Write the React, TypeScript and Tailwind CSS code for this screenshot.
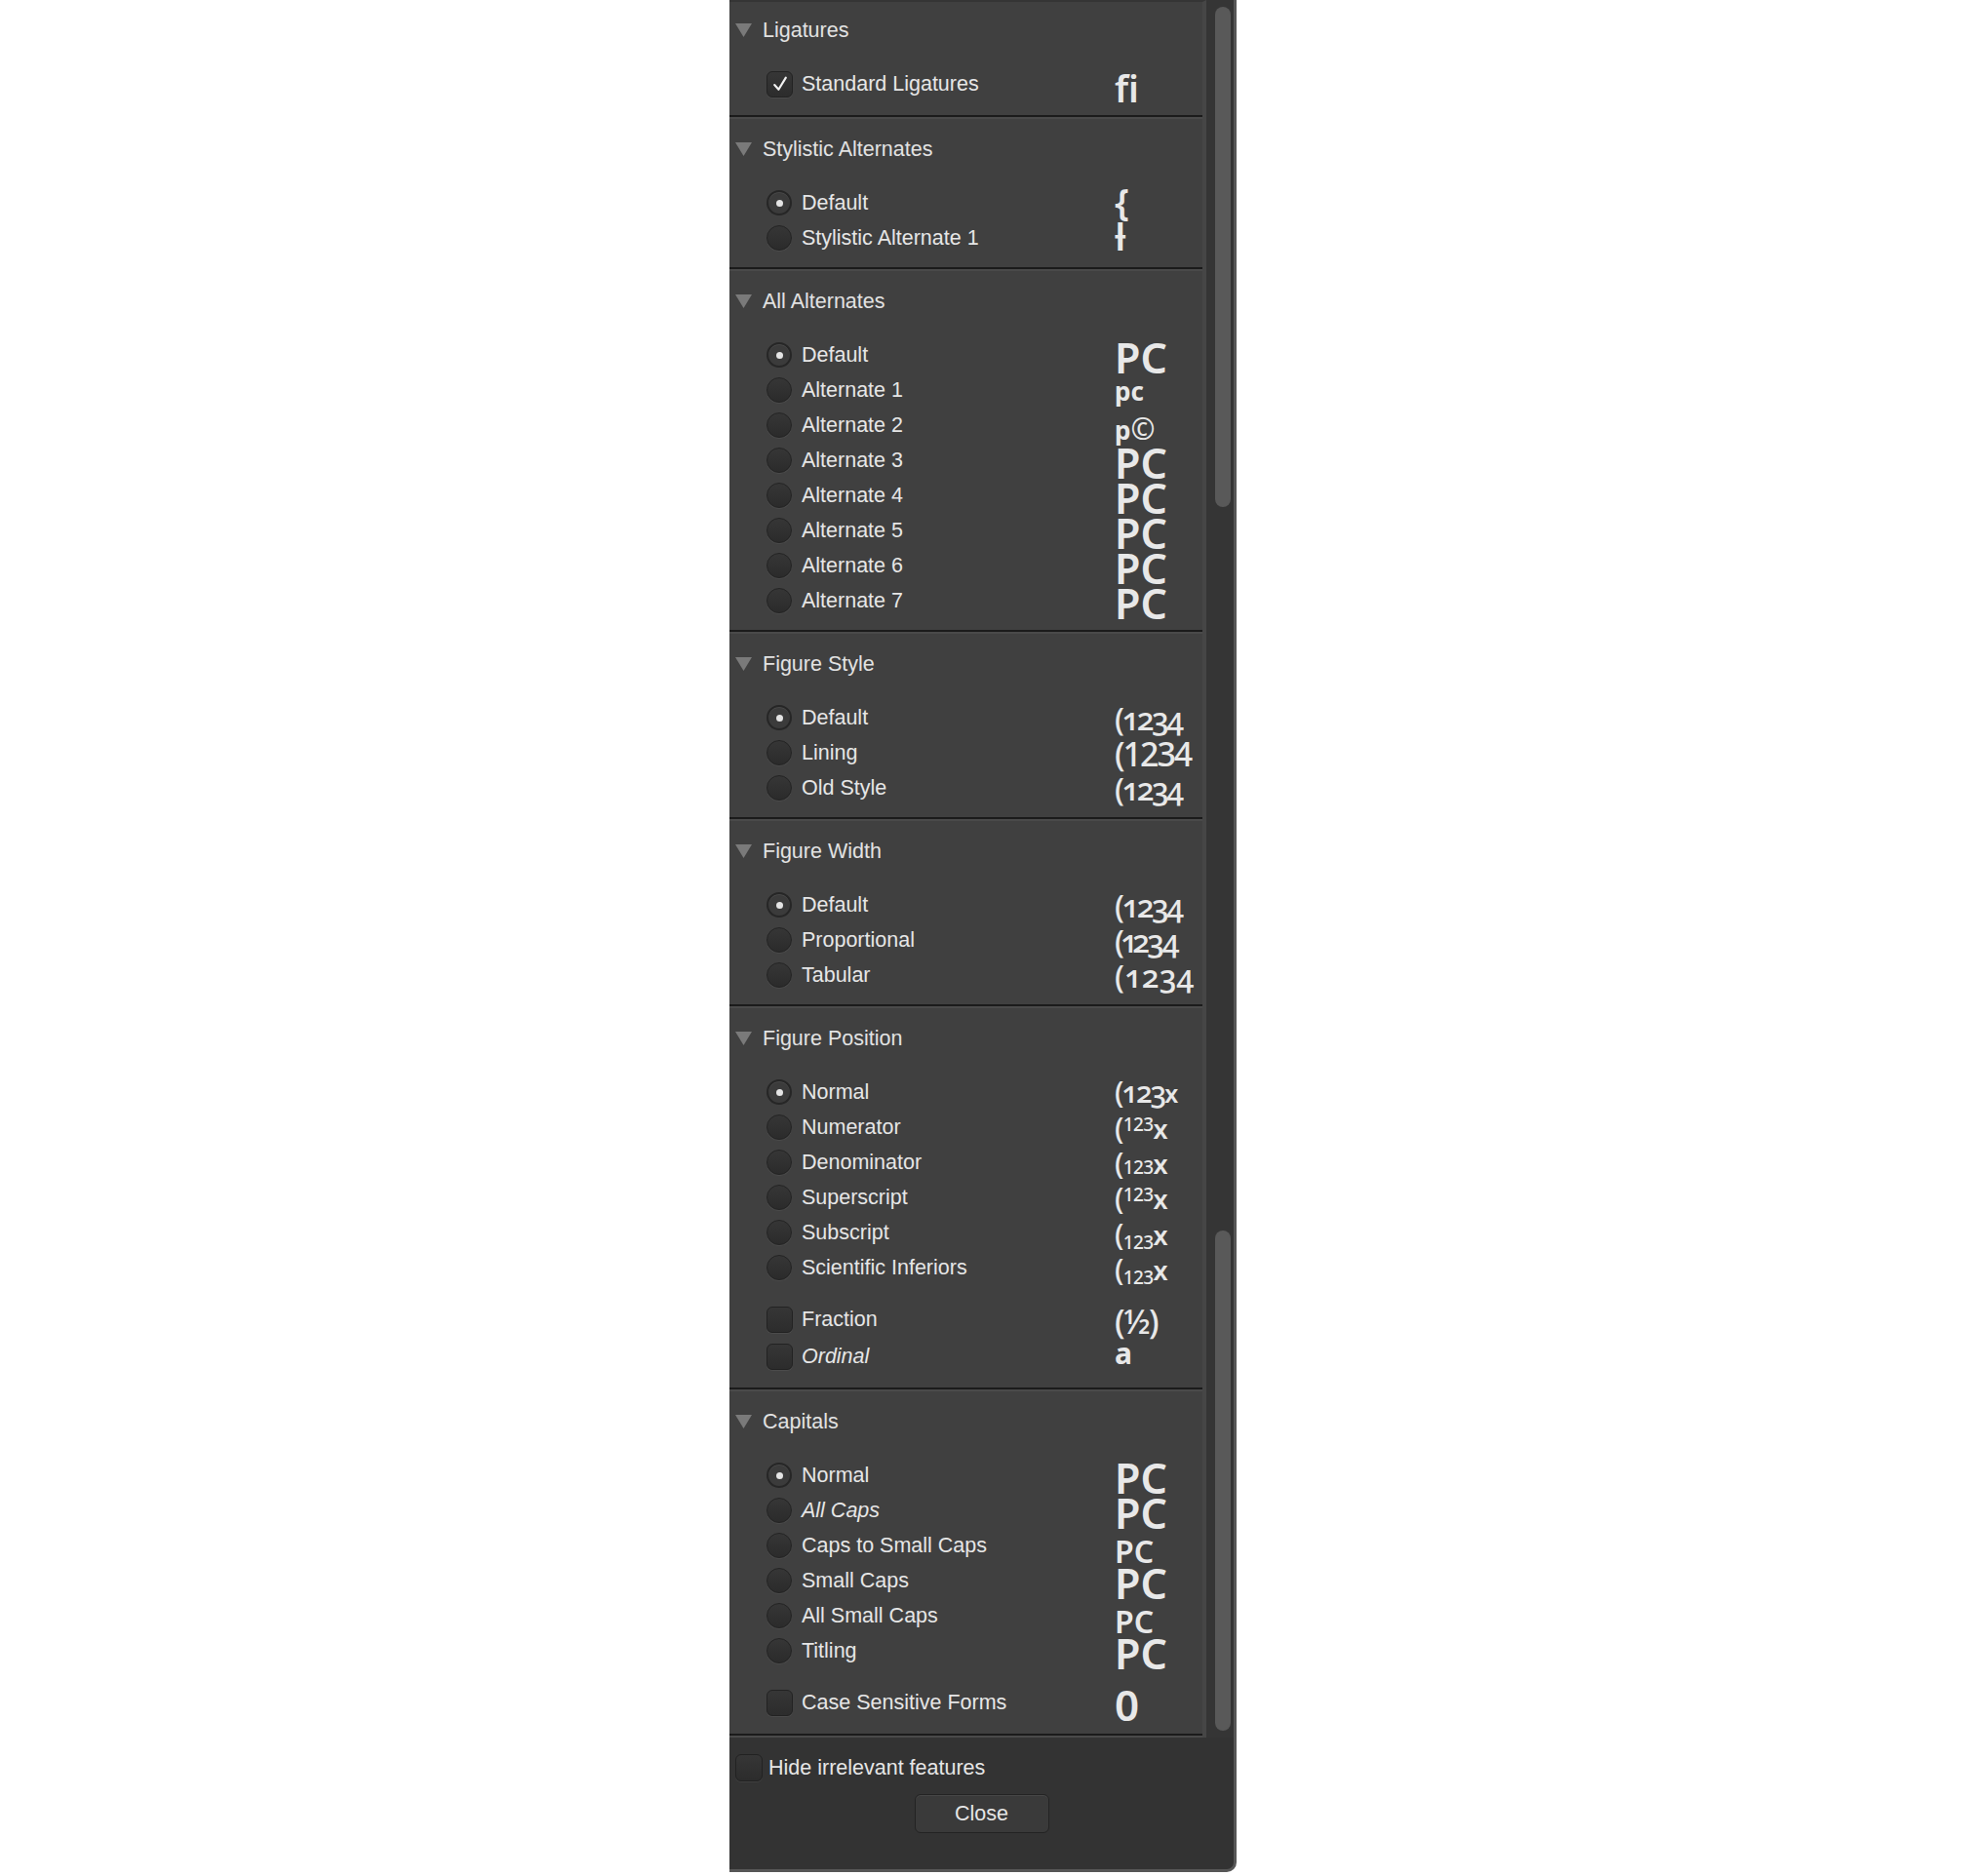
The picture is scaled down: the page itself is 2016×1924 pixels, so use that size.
import type { ReactNode } from "react";

type Row = {
  kind: "radio" | "check";
  label: string;
  on?: boolean;
  italic?: boolean;
  gap?: boolean;
  sample: ReactNode;
};

type Section = { title: string; rows: Row[] };

const SAMPLE = "font-['Noto_Sans',sans-serif] text-[#e8e8e8] leading-none whitespace-nowrap";

const bigPC = <div className={`${SAMPLE} text-[43px] font-semibold -mt-[1px]`}>PC</div>;
const smallPC = <div className={`${SAMPLE} text-[32px] font-semibold mt-[8px]`}>PC</div>;
const osNums = (extra: string) => (
  <div className={`${SAMPLE} text-[32px] font-medium oldstyle-nums ${extra}`}>(1234</div>
);
const supNums = (
  <div className={`${SAMPLE} text-[30px] font-medium mt-[4px] tracking-[-0.02em]`}>
    (<span className="text-[19px] lining-nums align-[8px]">123</span>
    <span className="text-[27px] font-semibold">x</span>
  </div>
);
const dnomNums = (
  <div className={`${SAMPLE} text-[30px] font-medium mt-[4px] tracking-[-0.02em]`}>
    (<span className="text-[19px] lining-nums">123</span>
    <span className="text-[27px] font-semibold">x</span>
  </div>
);
const subNums = (
  <div className={`${SAMPLE} text-[30px] font-medium mt-[5px] tracking-[-0.02em]`}>
    (<span className="text-[19px] lining-nums align-[-4px]">123</span>
    <span className="text-[27px] font-semibold">x</span>
  </div>
);

const sections: Section[] = [
  {
    title: "Ligatures",
    rows: [
      {
        kind: "check",
        label: "Standard Ligatures",
        on: true,
        sample: <div className={`${SAMPLE} text-[38px] font-semibold mt-[3px]`}>fi</div>,
      },
    ],
  },
  {
    title: "Stylistic Alternates",
    rows: [
      {
        kind: "radio",
        label: "Default",
        on: true,
        sample: <div className={`${SAMPLE} text-[38px] font-semibold -mt-[3px]`}>{"{"}</div>,
      },
      {
        kind: "radio",
        label: "Stylistic Alternate 1",
        sample: <div className={`${SAMPLE} text-[38px] font-semibold -mt-[3px]`}>ƚ</div>,
      },
    ],
  },
  {
    title: "All Alternates",
    rows: [
      { kind: "radio", label: "Default", on: true, sample: bigPC },
      {
        kind: "radio",
        label: "Alternate 1",
        sample: <div className={`${SAMPLE} text-[26px] font-bold mt-[6px]`}>pc</div>,
      },
      {
        kind: "radio",
        label: "Alternate 2",
        sample: (
          <div className={`${SAMPLE} text-[26px] font-bold mt-[7px]`}>
            p<span className="text-[30px] font-normal">©</span>
          </div>
        ),
      },
      { kind: "radio", label: "Alternate 3", sample: bigPC },
      { kind: "radio", label: "Alternate 4", sample: bigPC },
      { kind: "radio", label: "Alternate 5", sample: bigPC },
      { kind: "radio", label: "Alternate 6", sample: bigPC },
      { kind: "radio", label: "Alternate 7", sample: bigPC },
    ],
  },
  {
    title: "Figure Style",
    rows: [
      { kind: "radio", label: "Default", on: true, sample: osNums("mt-[3px] tracking-[-0.08em]") },
      {
        kind: "radio",
        label: "Lining",
        sample: (
          <div className={`${SAMPLE} text-[34px] font-medium lining-nums tracking-[-0.06em] mt-[2px]`}>
            (1234
          </div>
        ),
      },
      { kind: "radio", label: "Old Style", sample: osNums("mt-[3px] tracking-[-0.08em]") },
    ],
  },
  {
    title: "Figure Width",
    rows: [
      { kind: "radio", label: "Default", on: true, sample: osNums("mt-[3px] tracking-[-0.08em]") },
      { kind: "radio", label: "Proportional", sample: osNums("mt-[3px] tracking-[-0.08em] proportional-nums") },
      { kind: "radio", label: "Tabular", sample: osNums("mt-[3px] tabular-nums") },
    ],
  },
  {
    title: "Figure Position",
    rows: [
      {
        kind: "radio",
        label: "Normal",
        on: true,
        sample: (
          <div className={`${SAMPLE} text-[30px] font-medium oldstyle-nums tracking-[-0.07em] mt-[3px]`}>
            (123<span className="text-[25px] font-semibold">x</span>
          </div>
        ),
      },
      { kind: "radio", label: "Numerator", sample: supNums },
      { kind: "radio", label: "Denominator", sample: dnomNums },
      { kind: "radio", label: "Superscript", sample: supNums },
      { kind: "radio", label: "Subscript", sample: subNums },
      { kind: "radio", label: "Scientific Inferiors", sample: subNums },
      {
        kind: "check",
        label: "Fraction",
        gap: true,
        sample: <div className={`${SAMPLE} text-[34px] font-medium mt-[3px] tracking-[-0.04em]`}>(½)</div>,
      },
      {
        kind: "check",
        label: "Ordinal",
        italic: true,
        sample: <div className={`${SAMPLE} text-[30px] font-bold`}>a</div>,
      },
    ],
  },
  {
    title: "Capitals",
    rows: [
      { kind: "radio", label: "Normal", on: true, sample: bigPC },
      { kind: "radio", label: "All Caps", italic: true, sample: bigPC },
      { kind: "radio", label: "Caps to Small Caps", sample: smallPC },
      { kind: "radio", label: "Small Caps", sample: bigPC },
      { kind: "radio", label: "All Small Caps", sample: smallPC },
      { kind: "radio", label: "Titling", sample: bigPC },
      {
        kind: "check",
        label: "Case Sensitive Forms",
        gap: true,
        sample: <div className={`${SAMPLE} text-[44px] font-semibold lining-nums -mt-[2px]`}>0</div>,
      },
    ],
  },
];

function Radio({ on }: { on?: boolean }) {
  if (on) {
    return (
      <span className="flex h-[26px] w-[26px] shrink-0 items-center justify-center rounded-full border-2 border-[#262626] bg-[#3b3b3b] shadow-[inset_0_1px_0_rgba(255,255,255,0.08)]">
        <span className="h-[7px] w-[7px] rounded-full bg-[#e4e4e4]" />
      </span>
    );
  }
  return (
    <span className="h-[26px] w-[26px] shrink-0 rounded-full border border-[#232323] bg-gradient-to-b from-[#363636] to-[#2b2b2b] shadow-[0_1px_0_rgba(255,255,255,0.05)]" />
  );
}

function Check({ on, size = "w-[27px] h-[27px]" }: { on?: boolean; size?: string }) {
  return (
    <span
      className={`${size} flex shrink-0 items-center justify-center rounded-[6px] border border-[#222222] bg-gradient-to-b from-[#363636] to-[#2c2c2c] shadow-[0_1px_0_rgba(255,255,255,0.06)]`}
    >
      {on && (
        <svg width="18" height="18" viewBox="0 0 17 17" fill="none">
          <path d="M3 9.5 L7 14 L14 2.5" stroke="#f2f2f2" strokeWidth="2" strokeLinecap="round" strokeLinejoin="round" />
        </svg>
      )}
    </span>
  );
}

function Header({ title }: { title: string }) {
  return (
    <div className="flex h-9 items-center pl-[6px]">
      <svg width="17" height="14" viewBox="0 0 17 14">
        <polygon points="0,0 17,0 8.5,14" fill="#7a7a7a" />
      </svg>
      <span className="ml-[11px] text-[21.5px] text-[#e2e2e2]">{title}</span>
    </div>
  );
}

function FeatureRow({ row }: { row: Row }) {
  return (
    <div className={`flex h-9 items-start ${row.gap ? "mt-[17px]" : row.kind === "check" && !row.on ? "mt-[2px]" : ""}`}>
      <div className={`flex h-9 w-[395px] items-center pl-[38px] ${row.kind === "radio" ? "gap-[10px]" : "gap-[9px]"}`}>
        {row.kind === "radio" ? <Radio on={row.on} /> : <Check on={row.on} />}
        <span className={`text-[21.5px] text-[#e6e6e6] ${row.italic ? "italic" : ""}`}>{row.label}</span>
      </div>
      {row.sample}
    </div>
  );
}

export default function App() {
  return (
    <div className="flex min-h-[1924px] justify-center bg-white font-['Liberation_Sans',Arial,sans-serif]">
      <div className="flex h-[1920px] w-[520px] flex-col rounded-br-[10px] border-r-[3px] border-b-[3px] border-[#575757] bg-[#333333]">
        <div className="flex">
          {/* feature list */}
          <div className="w-[489px] border-t-2 border-r-4 border-t-[#353535] border-r-[#464646] bg-[#404040]">
            {sections.map((s, i) => (
              <div key={s.title}>
                <div className={`${i === 0 ? "pt-[11px]" : "pt-[13px]"} ${s.rows[s.rows.length - 1].kind === "check" ? "pb-[14px]" : "pb-[12px]"}`}>
                  <Header title={s.title} />
                  <div className="mt-[19px]">
                    {s.rows.map((r) => (
                      <FeatureRow key={r.label} row={r} />
                    ))}
                  </div>
                </div>
                <div className="h-[2px] bg-[#1b1b1b]" />
                <div className="h-[2px] bg-[#4a4a4a]" />
              </div>
            ))}
          </div>
          {/* scrollbar */}
          <div className="flex flex-1 flex-col justify-between bg-[#353535] py-[7px] pl-[9px]">
            <div className="h-[513px] w-4 rounded-full bg-[#595959]" />
            <div className="h-[513px] w-4 rounded-full bg-[#595959]" />
          </div>
        </div>

        <div className="flex flex-col pt-[15px]">
          <div className="flex items-center gap-[6px] pl-[6px]">
            <Check size="w-[28px] h-[28px]" />
            <span className="text-[21.5px] text-[#e6e6e6]">Hide irrelevant features</span>
          </div>
          <button className="mx-auto mt-[11px] h-[40px] w-[138px] rounded-[6px] border border-[#232323] bg-[#3a3a3a] text-[21.5px] text-[#e6e6e6] shadow-[inset_0_1px_0_rgba(255,255,255,0.07)]">
            Close
          </button>
        </div>
      </div>
    </div>
  );
}
